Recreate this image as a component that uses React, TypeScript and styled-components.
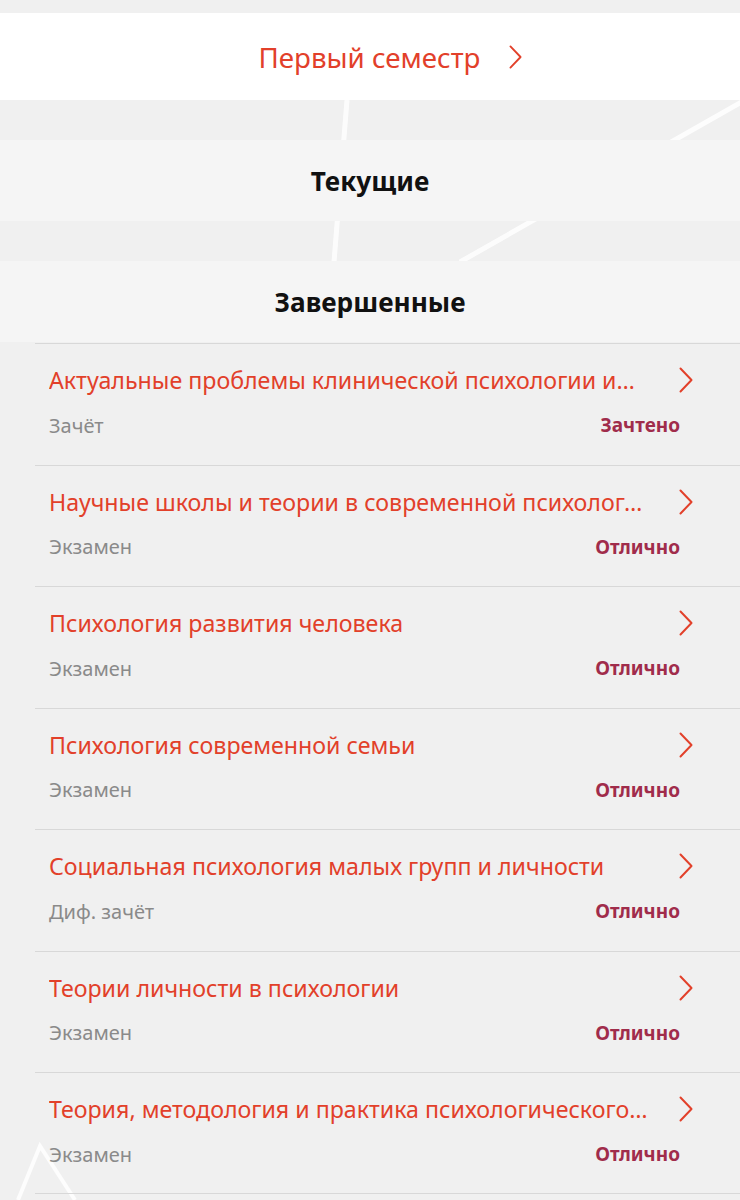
import React from "react";
import styled, { createGlobalStyle } from "styled-components";

const GlobalStyle = createGlobalStyle`
  html, body {
    margin: 0;
    padding: 0;
    background: #f0f0f0;
  }
  * { box-sizing: border-box; }
`;

const RED = "#e2402a";
const FONT = `"Noto Sans", Roboto, sans-serif`;

const Page = styled.div`
  position: relative;
  width: 740px;
  min-height: 1200px;
  overflow: hidden;
  background: #f0f0f0;
  font-family: ${FONT};
`;

const Decor = styled.svg`
  position: absolute;
  inset: 0;
  width: 740px;
  height: 1200px;
  pointer-events: none;
  z-index: 0;
`;

const Content = styled.div`
  position: relative;
  z-index: 1;
  padding-top: 13px;
`;

const SemesterBar = styled.div`
  height: 87px;
  background: #ffffff;
  display: flex;
  align-items: center;
  justify-content: center;
  gap: 29px;
  color: ${RED};
  font-size: 27.7px;
  padding-left: 41px;
`;

const SectionHeader = styled.div`
  margin-top: 40px;
  height: 81px;
  background: #f5f5f5;
  display: flex;
  align-items: center;
  justify-content: center;
  color: #111111;
  font-size: 26.2px;
  font-weight: 700;
`;

const List = styled.div`
  margin-left: 35px;
  margin-top: 1px;
`;

const Row = styled.div`
  height: 121.5px;
  border-top: 1px solid #d8d8d8;
  padding: 20px 47px 0 14px;
  display: flex;
  flex-direction: column;
  &:last-child {
    border-bottom: 1px solid #d8d8d8;
  }
`;

const TitleLine = styled.div`
  display: flex;
  align-items: center;
  justify-content: space-between;
  gap: 16px;
  height: 32px;
`;

const Title = styled.div`
  color: ${RED};
  font-size: 23.2px;
  white-space: nowrap;
  overflow: hidden;
  text-overflow: ellipsis;
`;

const MetaLine = styled.div`
  margin-top: 16px;
  height: 26px;
  display: flex;
  align-items: center;
  justify-content: space-between;
  padding-right: 13px;
`;

const Kind = styled.span`
  color: #8a8a8a;
  font-size: 20px;
`;

const Grade = styled.span`
  color: #a02c4b;
  font-size: 19px;
  font-weight: 700;
`;

const Chevron = ({ w = 14, h = 26 }: { w?: number; h?: number }) => (
  <svg width={w} height={h} viewBox="0 0 14 26" fill="none" style={{ flexShrink: 0 }}>
    <path d="M1.5 1.5 L12.5 13 L1.5 24.5" stroke={RED} strokeWidth="2" strokeLinecap="round" strokeLinejoin="round" />
  </svg>
);

const items = [
  { title: "Актуальные проблемы клинической психологии и…", kind: "Зачёт", grade: "Зачтено" },
  { title: "Научные школы и теории в современной психолог…", kind: "Экзамен", grade: "Отлично" },
  { title: "Психология развития человека", kind: "Экзамен", grade: "Отлично" },
  { title: "Психология современной семьи", kind: "Экзамен", grade: "Отлично" },
  { title: "Социальная психология малых групп и личности", kind: "Диф. зачёт", grade: "Отлично" },
  { title: "Теории личности в психологии", kind: "Экзамен", grade: "Отлично" },
  { title: "Теория, методология и практика психологического…", kind: "Экзамен", grade: "Отлично" },
];

export default function App() {
  return (
    <Page>
      <GlobalStyle />
      <Decor viewBox="0 0 740 1200">
        <g stroke="#ffffff" strokeWidth="5" opacity="0.85" fill="none">
          <line x1="347" y1="100" x2="334" y2="262" />
          <line x1="745" y1="100" x2="460" y2="262" />
          <polyline points="18,1200 40,1146 75,1200" strokeWidth="4" />
        </g>
      </Decor>
      <Content>
        <SemesterBar>
          <span>Первый семестр</span>
          <Chevron w={13} h={24} />
        </SemesterBar>
        <SectionHeader>Текущие</SectionHeader>
        <SectionHeader>Завершенные</SectionHeader>
        <List>
          {items.map((it, i) => (
            <Row key={i}>
              <TitleLine>
                <Title>{it.title}</Title>
                <Chevron />
              </TitleLine>
              <MetaLine>
                <Kind>{it.kind}</Kind>
                <Grade>{it.grade}</Grade>
              </MetaLine>
            </Row>
          ))}
        </List>
      </Content>
    </Page>
  );
}
